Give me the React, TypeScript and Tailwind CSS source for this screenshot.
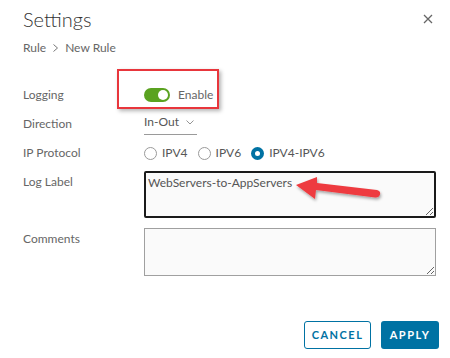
import React from "react";

function Radio({ checked, label }: { checked?: boolean; label: string }) {
  return (
    <label className="flex items-center gap-[5px]">
      {checked ? (
        <span className="w-[13px] h-[13px] rounded-full bg-[#0072a3] flex items-center justify-center">
          <span className="w-[5px] h-[5px] rounded-full bg-white" />
        </span>
      ) : (
        <span className="w-[13px] h-[13px] rounded-full border border-[#9a9a9a] bg-white" />
      )}
      <span className="text-[12px] text-[#565656]">{label}</span>
    </label>
  );
}

function Row({ label, children, top = false }: { label: string; children: React.ReactNode; top?: boolean }) {
  return (
    <div className={`flex ${top ? "items-start" : "items-center"}`}>
      <div className={`w-[121px] shrink-0 text-[12px] text-[#666] ${top ? "pt-[2px]" : ""}`}>{label}</div>
      <div className="flex-1">{children}</div>
    </div>
  );
}

export default function App() {
  return (
    <div
      className="relative w-[450px] h-[358px] bg-white overflow-hidden"
      style={{ fontFamily: "Lato, 'Open Sans', sans-serif" }}
    >
      <div className="pl-[23px] pr-[14px]">
        <div className="flex items-center justify-between h-[36px] pt-[2px]">
          <h1 className="text-[20px] font-light text-[#333] leading-none">Settings</h1>
          <svg width="10" height="10" viewBox="0 0 10 10" className="mr-[3px]">
            <path d="M1 1L9 9M9 1L1 9" stroke="#666" strokeWidth="1.3" />
          </svg>
        </div>
        <div className="mt-[3px] flex items-center gap-[6px] text-[12px] text-[#666]">
          <span>Rule</span>
          <svg width="7" height="10" viewBox="0 0 7 10">
            <path d="M1.5 1.5L5.5 5L1.5 8.5" stroke="#777" strokeWidth="1" fill="none" />
          </svg>
          <span>New Rule</span>
        </div>

        <div className="mt-[28px] flex flex-col">
          <Row label="Logging">
            <div className="relative flex items-center gap-[8px] h-[20px]">
              <span className="relative w-[26px] h-[14px] rounded-full bg-[#5aa220]">
                <span className="absolute right-[2px] top-[2px] w-[10px] h-[10px] rounded-full bg-white" />
              </span>
              <span className="text-[12px] text-[#666]">Enable</span>
              <div className="absolute left-[-27px] top-[-16px] w-[102px] h-[40px] border-2 border-[#e8363c] shadow-[2px_2px_4px_rgba(0,0,0,0.3)]" />
            </div>
          </Row>
          <div className="h-[8px]" />
          <Row label="Direction">
            <div className="w-[53px] flex items-center justify-between border-b border-[#9a9a9a] pb-[3px]">
              <span className="text-[12px] text-[#565656]">In-Out</span>
              <svg width="8" height="5" viewBox="0 0 8 5" className="mr-[3px]">
                <path d="M0.5 0.5L4 4L7.5 0.5" stroke="#888" strokeWidth="0.9" fill="none" />
              </svg>
            </div>
          </Row>
          <div className="h-[8px]" />
          <Row label="IP Protocol">
            <div className="flex items-center gap-[10px] h-[20px]">
              <Radio label="IPV4" />
              <Radio label="IPV6" />
              <Radio checked label="IPV4-IPV6" />
            </div>
          </Row>
          <div className="h-[8px]" />
          <Row label="Log Label" top>
            <textarea
              readOnly
              value="WebServers-to-AppServers"
              className="block w-[292px] h-[47px] bg-[#fafafa] border-2 border-[#1a1a1a] rounded-[2px] px-[2px] pt-[1px] text-[12px] text-[#555] outline-none resize-y"
            />
          </Row>
          <div className="h-[10px]" />
          <Row label="Comments" top>
            <textarea
              readOnly
              className="block w-[292px] h-[48px] bg-[#fafafa] border border-[#a0a0a0] text-[12px] outline-none resize-y"
            />
          </Row>
        </div>

        <div className="mt-[45px] flex justify-end gap-[10px]">
          <button className="w-[67px] h-[28px] border border-[#0072a3] rounded-[3px] text-[11px] font-bold tracking-[1.5px] text-[#0072a3]">
            CANCEL
          </button>
          <button className="w-[58px] h-[28px] bg-[#0072a3] rounded-[3px] text-[11px] font-bold tracking-[1.5px] text-white mr-[-3px]">
            APPLY
          </button>
        </div>
      </div>

      <svg className="absolute left-[290px] top-[172px]" width="96" height="32" viewBox="0 0 96 32">
        <defs>
          <filter id="sh" x="-20%" y="-40%" width="140%" height="180%">
            <feDropShadow dx="1" dy="2" stdDeviation="1.5" floodOpacity="0.35" />
          </filter>
        </defs>
        <g filter="url(#sh)">
          <path d="M6 13 L27 5 L27 11 L87 18 Q91 19 90 22.5 Q89 26 85 25.5 L26 18 L25 27 Z" fill="#ee3b3f" />
        </g>
      </svg>
    </div>
  );
}
